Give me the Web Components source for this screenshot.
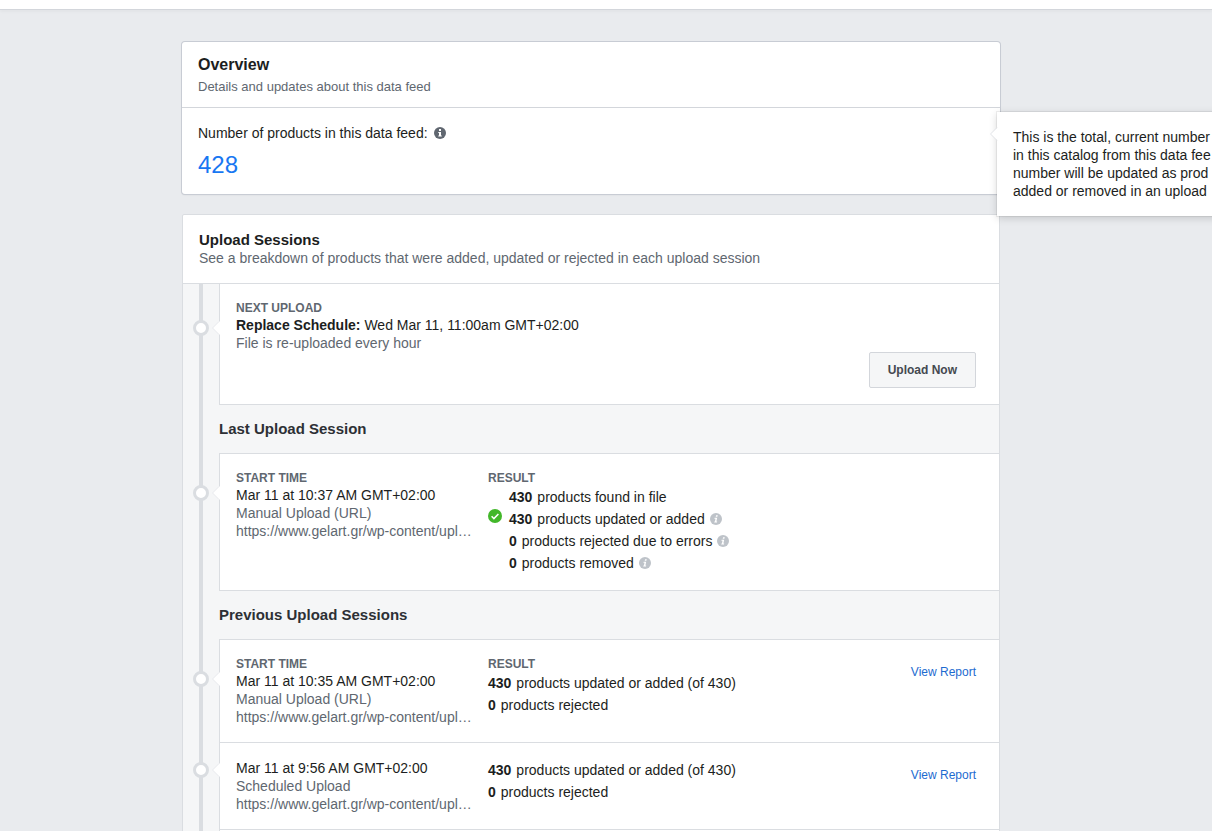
<!DOCTYPE html>
<html lang="en">
<head>
<meta charset="utf-8">
<title>Data feed</title>
<style>
  html, body {
    margin: 0;
    height: 100%;
  }
  body {
    font-family: "Liberation Sans", Arial, sans-serif;
    font-size: 14px;
    line-height: 18px;
    color: #1c1e21;
    background-color: #e9ebee;
    overflow: hidden;
    --muted: #606770;
    --line: #dadde1;
    --link: #1d6bd0;
  }
</style>
</head>
<body>
<feed-page>
  <feed-overview heading="Overview" note="Details and updates about this data feed" label="Number of products in this data feed:" value="428">
    <feed-tooltip>
      <div>This is the total, current number</div>
      <div>in this catalog from this data fee</div>
      <div>number will be updated as prod</div>
      <div>added or removed in an upload</div>
    </feed-tooltip>
  </feed-overview>
  <upload-sessions heading="Upload Sessions" note="See a breakdown of products that were added, updated or rejected in each upload session">
    <upload-entry kind="next" label="NEXT UPLOAD">
      <div><feed-strong>Replace Schedule:</feed-strong> Wed Mar 11, 11:00am GMT+02:00</div>
      <feed-muted>File is re-uploaded every hour</feed-muted>
      <feed-button slot="footer">Upload Now</feed-button>
    </upload-entry>
    <session-title>Last Upload Session</session-title>
    <upload-entry label="START TIME">
      <div>Mar 11 at 10:37 AM GMT+02:00</div>
      <feed-muted>Manual Upload (URL)</feed-muted>
      <feed-muted>https://www.gelart.gr/wp-content/upl…</feed-muted>
      <result-list slot="result" label="RESULT" indent>
        <result-row count="430">products found in file</result-row>
        <result-row count="430" done info>products updated or added</result-row>
        <result-row count="0" info>products rejected due to errors</result-row>
        <result-row count="0" info>products removed</result-row>
      </result-list>
    </upload-entry>
    <session-title>Previous Upload Sessions</session-title>
    <upload-entry label="START TIME">
      <div>Mar 11 at 10:35 AM GMT+02:00</div>
      <feed-muted>Manual Upload (URL)</feed-muted>
      <feed-muted>https://www.gelart.gr/wp-content/upl…</feed-muted>
      <result-list slot="result" label="RESULT">
        <result-row count="430">products updated or added (of 430)</result-row>
        <result-row count="0">products rejected</result-row>
      </result-list>
      <report-link slot="action">View Report</report-link>
    </upload-entry>
    <upload-entry kind="more">
      <div>Mar 11 at 9:56 AM GMT+02:00</div>
      <feed-muted>Scheduled Upload</feed-muted>
      <feed-muted>https://www.gelart.gr/wp-content/upl…</feed-muted>
      <result-list slot="result">
        <result-row count="430">products updated or added (of 430)</result-row>
        <result-row count="0">products rejected</result-row>
      </result-list>
      <report-link slot="action">View Report</report-link>
    </upload-entry>
    <upload-entry kind="more"></upload-entry>
  </upload-sessions>
</feed-page>

<script>
'use strict';

(function() {
  class FeedElement extends HTMLElement {
    constructor() {
      super();
      this.attachShadow({ mode: 'open' });
    }

    connectedCallback() {
      this.shadowRoot.innerHTML = this.render();
    }

    attr(name) {
      return this.getAttribute(name) || '';
    }
  }

  class FeedPage extends FeedElement {
    render() {
      return `
        <style>
          :host {
            display: block;
          }
          header {
            height: 9px;
            background-color: #fff;
            border-bottom: 1px solid #d3d6db;
            box-shadow: 0 2px 3px rgba(0, 0, 0, .03);
          }
          main {
            padding: 32px 30px 0 0;
          }
          .column {
            display: flex;
            flex-direction: column;
            gap: 20px;
            max-width: 818px;
            margin: 0 auto;
          }
        </style>
        <header></header>
        <main><div class="column"><slot></slot></div></main>
      `;
    }
  }

  class FeedOverview extends FeedElement {
    render() {
      return `
        <style>
          :host {
            display: block;
            position: relative;
            z-index: 1;
            background-color: #fff;
            border-radius: 3px;
            box-shadow: 0 0 0 1px #c8ccd4, 0 1px 2px rgba(0, 0, 0, .1);
          }
          .head {
            display: flex;
            flex-direction: column;
            gap: 3px;
            padding: 12px 16px;
            border-bottom: 1px solid #d3d6db;
          }
          h1 {
            margin: 0;
            font-size: 16px;
            line-height: 22px;
          }
          p {
            margin: 0;
            font-size: 13px;
            line-height: 16px;
            color: var(--muted);
          }
          .body {
            display: flex;
            flex-direction: column;
            gap: 10px;
            padding: 16px;
          }
          .label {
            display: flex;
            align-items: center;
            gap: 6px;
          }
          .value {
            font-size: 24px;
            line-height: 26px;
            color: #1877f2;
          }
        </style>
        <div class="head">
          <h1>${this.attr('heading')}</h1>
          <p>${this.attr('note')}</p>
        </div>
        <div class="body">
          <div class="label">${this.attr('label')}
            <svg width="12" height="12" viewBox="0 0 12 12">
              <circle cx="6" cy="6" r="6" fill="#606770"/>
              <path d="M5 2h2v2H5zM4.300 5H7v3.500h.8v1H4.300v-1H5V6h-.7z" fill="#fff"/>
            </svg>
          </div>
          <div class="value">${this.attr('value')}</div>
        </div>
        <slot></slot>
      `;
    }
  }

  class FeedTooltip extends FeedElement {
    render() {
      // sits over both cards and runs past the right edge of the window
      return `
        <style>
          :host {
            display: block;
            position: absolute;
            top: 70px;
            left: calc(100% - 3px);
            width: 300px;
            padding: 16px;
            box-sizing: border-box;
            white-space: nowrap;
            background-color: #fff;
            box-shadow: 0 0 0 1px rgba(0, 0, 0, .06), 0 2px 8px rgba(0, 0, 0, .16);
          }
          svg {
            position: absolute;
            top: 15px;
            left: -7px;
          }
        </style>
        <svg width="8" height="14" viewBox="0 0 8 14">
          <path d="M8 0L1 7l7 7z" fill="#fff"/>
          <path d="M7 0.500L0.500 7 7 13.500" fill="none" stroke="#e2e4e8"/>
        </svg>
        <slot></slot>
      `;
    }
  }

  class UploadSessions extends FeedElement {
    render() {
      return `
        <style>
          :host {
            display: block;
            background-color: #fff;
            border: 1px solid var(--line);
            border-radius: 2px;
          }
          .head {
            padding: 16px;
            border-bottom: 1px solid var(--line);
          }
          h2 {
            margin: 0;
            font-size: 15px;
            line-height: 18px;
          }
          p {
            margin: 0;
            color: var(--muted);
          }
          .timeline {
            background: linear-gradient(var(--line), var(--line)) 16px 0 / 4px 100% no-repeat #f5f6f7;
          }
        </style>
        <div class="head">
          <h2>${this.attr('heading')}</h2>
          <p>${this.attr('note')}</p>
        </div>
        <div class="timeline"><slot></slot></div>
      `;
    }
  }

  class SessionTitle extends FeedElement {
    render() {
      return `
        <style>
          :host {
            display: block;
            margin-left: 36px;
            border-top: 1px solid var(--line);
          }
          h3 {
            margin: 0;
            font-size: 15px;
            line-height: 48px;
            color: #2d3035;
          }
        </style>
        <h3><slot></slot></h3>
      `;
    }
  }

  class UploadEntry extends FeedElement {
    render() {
      const label = this.attr('label');
      return `
        <style>
          :host {
            display: grid;
            grid-template-columns: 36px minmax(0, 1fr);
            --mark: 32px;
          }
          :host([kind="next"]) {
            --mark: 36px;
          }
          :host([kind="more"]) {
            --mark: 20px;
          }
          .rail {
            display: flex;
            align-items: flex-start;
            justify-content: space-between;
            padding: var(--mark) 0 0 10px;
          }
          .dot {
            width: 16px;
            height: 16px;
            box-sizing: border-box;
            border: 3px solid var(--line);
            border-radius: 50%;
            background-color: #fff;
          }
          .rail svg {
            display: block;
            position: relative;
            margin-right: -1px;
          }
          .card {
            background-color: #fff;
            border-left: 1px solid var(--line);
            border-top: 1px solid var(--line);
            padding: 16px 23px 16px 16px;
          }
          :host([kind="next"]) .card {
            border-top: none;
          }
          .columns {
            display: flex;
            gap: 16px;
          }
          .info {
            flex: 0 0 236px;
            min-width: 0;
          }
          :host([kind="next"]) .info {
            flex: 1;
          }
          .label {
            font-size: 12px;
            line-height: 16px;
            font-weight: bold;
            color: var(--muted);
          }
          .result {
            flex: 1;
          }
          .footer {
            display: flex;
            justify-content: flex-end;
          }
        </style>
        <div class="rail">
          <span class="dot"></span>
          <svg width="8" height="16" viewBox="0 0 8 16">
            <path d="M8 1L1 8l7 7z" fill="#fff"/>
            <path d="M7 1.500L0.500 8 7 14.500" fill="none" stroke="#e9ebee"/>
          </svg>
        </div>
        <div class="card">
          <div class="columns">
            <div class="info">
              ${label ? `<div class="label">${label}</div>` : ''}
              <slot></slot>
            </div>
            <div class="result"><slot name="result"></slot></div>
            <slot name="action"></slot>
          </div>
          <div class="footer"><slot name="footer"></slot></div>
        </div>
      `;
    }
  }

  class ResultList extends FeedElement {
    render() {
      const label = this.attr('label');
      return `
        <style>
          :host {
            display: block;
            --indent: 0px;
          }
          :host([indent]) {
            --indent: 21px;
          }
          .label {
            font-size: 12px;
            line-height: 16px;
            font-weight: bold;
            color: var(--muted);
          }
        </style>
        ${label ? `<div class="label">${label}</div>` : ''}
        <slot></slot>
      `;
    }
  }

  class ResultRow extends FeedElement {
    render() {
      const done = `
        <svg width="14" height="14" viewBox="0 0 14 14">
          <circle cx="7" cy="7" r="7" fill="#42b72a"/>
          <path d="M3.600 7.300l2.300 2.300 4.500-4.700" fill="none" stroke="#fff" stroke-width="1.500"/>
        </svg>`;
      const info = `
        <svg width="12" height="12" viewBox="0 0 12 12">
          <circle cx="6" cy="6" r="6" fill="#bec3c9"/>
          <path d="M6.100 2.200h1.700l-.4 1.600H5.700zM4.600 4.800h2.600L6.400 8.400h.8l-.2 1H4.200l.2-1h.5l.6-2.600h-1.100z" fill="#fff"/>
        </svg>`;
      return `
        <style>
          :host {
            display: flex;
            line-height: 22px;
          }
          .mark {
            flex: 0 0 var(--indent);
            height: 16px;
            display: flex;
            align-items: center;
          }
          .text {
            display: flex;
            align-items: center;
            gap: 5px;
          }
        </style>
        <span class="mark">${this.hasAttribute('done') ? done : ''}</span>
        <span class="text">
          <b>${this.attr('count')}</b>
          <span><slot></slot></span>
          ${this.hasAttribute('info') ? info : ''}
        </span>
      `;
    }
  }

  class FeedStrong extends FeedElement {
    render() {
      return `<style>:host { font-weight: bold; }</style><slot></slot>`;
    }
  }

  class FeedMuted extends FeedElement {
    render() {
      return `
        <style>
          :host {
            display: block;
            color: var(--muted);
            white-space: nowrap;
          }
        </style>
        <slot></slot>
      `;
    }
  }

  class FeedButton extends FeedElement {
    render() {
      return `
        <style>
          :host {
            display: block;
          }
          button {
            display: block;
            height: 36px;
            padding: 0 18px;
            font: bold 12px "Liberation Sans", Arial, sans-serif;
            color: #444950;
            background-color: #f5f6f7;
            border: 1px solid #d3d6db;
            border-radius: 2px;
            cursor: pointer;
          }
        </style>
        <button type="button"><slot></slot></button>
      `;
    }
  }

  class ReportLink extends FeedElement {
    render() {
      return `
        <style>
          :host {
            display: block;
          }
          a {
            font-size: 12px;
            line-height: 32px;
            color: var(--link);
            text-decoration: none;
          }
        </style>
        <a href="#report"><slot></slot></a>
      `;
    }
  }

  customElements.define('feed-page', FeedPage);
  customElements.define('feed-overview', FeedOverview);
  customElements.define('feed-tooltip', FeedTooltip);
  customElements.define('upload-sessions', UploadSessions);
  customElements.define('session-title', SessionTitle);
  customElements.define('upload-entry', UploadEntry);
  customElements.define('result-list', ResultList);
  customElements.define('result-row', ResultRow);
  customElements.define('feed-strong', FeedStrong);
  customElements.define('feed-muted', FeedMuted);
  customElements.define('feed-button', FeedButton);
  customElements.define('report-link', ReportLink);
})();
</script>
</body>
</html>
